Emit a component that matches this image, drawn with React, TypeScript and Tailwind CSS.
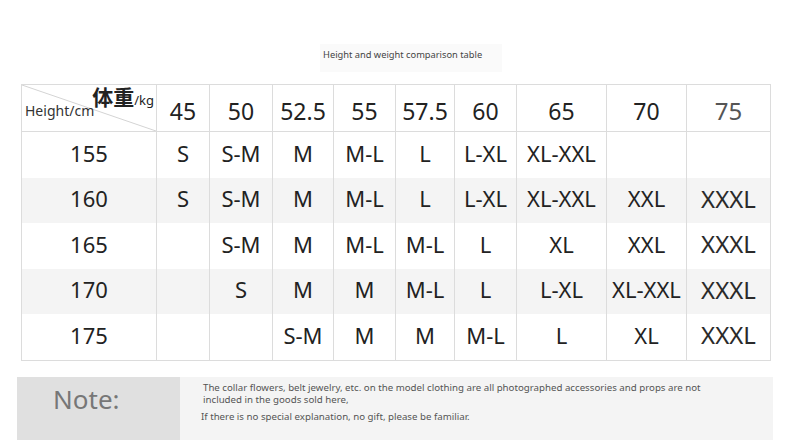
const cols = ["45", "50", "52.5", "55", "57.5", "60", "65", "70", "75"];

const rows: { h: string; sizes: string[] }[] = [
  { h: "155", sizes: ["S", "S-M", "M", "M-L", "L", "L-XL", "XL-XXL", "", ""] },
  { h: "160", sizes: ["S", "S-M", "M", "M-L", "L", "L-XL", "XL-XXL", "XXL", "XXXL"] },
  { h: "165", sizes: ["", "S-M", "M", "M-L", "M-L", "L", "XL", "XXL", "XXXL"] },
  { h: "170", sizes: ["", "S", "M", "M", "M-L", "L", "L-XL", "XL-XXL", "XXXL"] },
  { h: "175", sizes: ["", "", "S-M", "M", "M", "M-L", "L", "XL", "XXXL"] },
];

const rowHeights = ["h-[46px]", "h-[45px]", "h-[46px]", "h-[45px]", "h-[46px]"];

const font = "font-['Noto_Sans','Noto_Sans_CJK_SC',sans-serif]";

export default function App() {
  return (
    <div className={`w-[790px] h-[440px] bg-white overflow-hidden ${font}`}>
      {/* title */}
      <div className="pt-[44px] pl-[320px]">
        <div className="w-[182px] h-[28px] bg-[#fafafa] pl-[3px] pt-[5px] text-[9.3px] leading-[12px] text-[#444] whitespace-nowrap">
          Height and weight comparison table
        </div>
      </div>

      {/* table */}
      <div className="mt-[12px] ml-[21px] w-[750px] grid grid-cols-[135px_53px_63px_61px_62px_59px_62px_90px_80px_84px] border-l border-t border-[#dcdcdc]">
        <div className="relative h-[47px] border-r border-b border-[#dcdcdc]">
          <svg className="absolute inset-0" width="134" height="46" viewBox="0 0 134 46">
            <line x1="0" y1="0" x2="134" y2="46" stroke="#d4d4d4" strokeWidth="1" />
          </svg>
          <div className="absolute right-[2px] top-[0px] flex items-baseline text-[#222]">
            <span className="text-[21px] leading-[24px] font-bold">体重</span>
            <span className="text-[13px] leading-[16px]">/kg</span>
          </div>
          <div className="absolute left-[3px] top-[17px] text-[14px] leading-[18px] text-[#333]">Height/cm</div>
        </div>
        {cols.map((c, i) => (
          <div
            key={c}
            className={`h-[47px] pt-[6px] flex items-center justify-center border-r border-b border-[#dcdcdc] ${
              i === 8 ? "text-[24px] text-[#555]" : "text-[23px] text-[#222]"
            }`}
          >
            {c}
          </div>
        ))}
        {rows.map((r, ri) => {
          const bg = ri % 2 === 1 ? "bg-[#f4f4f4]" : "bg-white";
          const rh = rowHeights[ri];
          return [
            <div
              key={r.h}
              className={`${rh} ${bg} pb-[4px] flex items-center justify-center border-r border-[#dcdcdc] text-[22px] text-[#222]`}
            >
              {r.h}
            </div>,
            ...r.sizes.map((s, si) => (
              <div
                key={r.h + "-" + si}
                className={`${rh} ${bg} pb-[4px] flex items-center justify-center border-r border-[#dcdcdc] whitespace-nowrap ${
                  si === 8 ? "text-[24px] text-[#2a2a2a]" : "text-[22px] text-[#222]"
                }`}
              >
                {s}
              </div>
            )),
          ];
        })}
      </div>
      <div className="ml-[21px] w-[750px] h-px bg-[#dcdcdc]" />

      {/* note */}
      <div className="mt-[16px] ml-[17px] w-[756px] h-[64px] flex">
        <div className="w-[163px] h-full bg-[#e0e0e0] pl-[36px] pt-[7px] text-[26px] leading-[30px] text-[#777]">
          Note:
        </div>
        <div className="flex-1 h-full bg-[#f4f4f4] pt-[5px] text-[9.7px] leading-[12px] text-[#555]">
          <p className="pl-[23px] whitespace-nowrap">
            The collar flowers, belt jewelry, etc. on the model clothing are all photographed accessories and props are not
          </p>
          <p className="pl-[23px] whitespace-nowrap">included in the goods sold here,</p>
          <p className="pl-[21px] mt-[5px] whitespace-nowrap">If there is no special explanation, no gift, please be familiar.</p>
        </div>
      </div>
    </div>
  );
}
